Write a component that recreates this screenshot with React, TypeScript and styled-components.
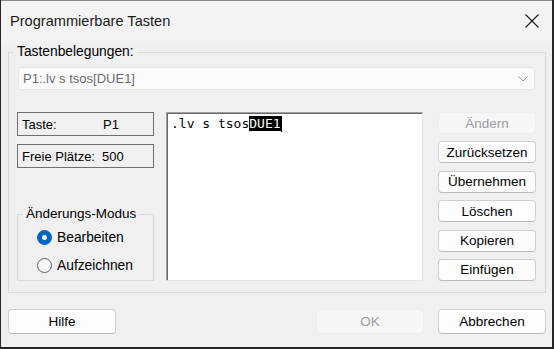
import React from "react";
import styled, { createGlobalStyle } from "styled-components";

const Global = createGlobalStyle`
  html, body { margin: 0; padding: 0; }
  body { background: #262626; font-family: "Liberation Sans", Arial, sans-serif; }
  * { box-sizing: border-box; }
`;

const Desktop = styled.div`
  width: 554px;
  height: 349px;
  display: flex;
  padding: 0 2px 2px 1px;
  background: #262626;
`;

const Window = styled.div`
  flex: 1;
  display: flex;
  flex-direction: column;
  background: #f0f0f0;
  border-top: 1px solid #8c8c8c;
`;

const TitleBar = styled.div`
  height: 40px;
  display: flex;
  align-items: center;
  justify-content: space-between;
  padding: 0 13px 0 9px;
  background: #f3f3f3;
`;

const Title = styled.span`
  font-size: 14.6px;
  color: #1a1a1a;
`;

const Body = styled.div`
  flex: 1;
  display: flex;
  flex-direction: column;
  padding: 3px 6px 0 7px;
`;

const Group = styled.fieldset`
  margin: 0;
  min-width: 0;
  border: 1px solid #dadada;
  padding: 0 0 11px 5px;
`;

const Legend = styled.legend<{ $size?: number }>`
  padding: 0 3px;
  font-size: ${(p) => p.$size ?? 13.8}px;
  line-height: 16px;
  color: #000;
`;

const Combo = styled.div`
  height: 23px;
  margin: 7px 10px 0 4px;
  display: flex;
  align-items: center;
  justify-content: space-between;
  padding: 0 6px 0 4px;
  background: #fafafa;
  border: 1px solid #e6e6e6;
  border-radius: 3px;
  font-size: 13px;
  color: #6d6d6d;
`;

const MainRow = styled.div`
  display: flex;
  height: 169px;
  margin: 22px 9px 0 3px;
`;

const LeftCol = styled.div`
  width: 137px;
  margin-right: 12px;
  display: flex;
  flex-direction: column;
`;

const InfoBox = styled.div<{ $gap?: number }>`
  height: 24px;
  margin-top: ${(p) => p.$gap ?? 0}px;
  display: flex;
  align-items: center;
  padding-left: 4px;
  border: 1px solid #6f6f6f;
  font-size: 13px;
  color: #000;
`;

const InfoLabel = styled.span<{ $w: number }>`
  width: ${(p) => p.$w}px;
`;

const ModeGroup = styled.fieldset`
  margin: auto 0 0 0;
  min-width: 0;
  height: 75px;
  border: 1px solid #dadada;
  padding: 1px 0 0 5px;
`;

const RadioRow = styled.div`
  height: 28px;
  display: flex;
  align-items: center;
  padding-left: 14px;
  gap: 5px;
  font-size: 13.8px;
  color: #000;
`;

const RadioDot = styled.span<{ $on?: boolean }>`
  width: 15px;
  height: 15px;
  border-radius: 50%;
  display: flex;
  align-items: center;
  justify-content: center;
  background: ${(p) => (p.$on ? "#0067c0" : "#f7f7f7")};
  border: 1px solid ${(p) => (p.$on ? "#0067c0" : "#5c5c5c")};
  &::after {
    content: "";
    width: 5px;
    height: 5px;
    border-radius: 50%;
    background: #fff;
    display: ${(p) => (p.$on ? "block" : "none")};
  }
`;

const Editor = styled.div`
  width: 257px;
  background: #fff;
  border-style: solid;
  border-width: 1px;
  border-color: #a0a0a0 #e3e3e3 #e3e3e3 #a0a0a0;
  box-shadow: inset 1px 1px 0 #696969;
  padding: 3px 0 0 4px;
  font-family: "DejaVu Sans Mono", "Liberation Mono", monospace;
  font-size: 13px;
  line-height: 16px;
  color: #000;
  white-space: pre;
`;

const Selected = styled.span`
  background: #000;
  color: #fff;
`;

const Caret = styled.span`
  display: inline-block;
  width: 1px;
  height: 16px;
  vertical-align: top;
  background: #000;
`;

const ButtonCol = styled.div`
  width: 98px;
  margin-left: 15px;
  display: flex;
  flex-direction: column;
  justify-content: space-between;
`;

const Button = styled.button<{ $off?: boolean; $w?: number; $h?: number }>`
  width: ${(p) => p.$w ?? 98}px;
  height: ${(p) => p.$h ?? 22}px;
  padding: 0;
  font-family: "Liberation Sans", Arial, sans-serif;
  font-size: 13.5px;
  border-radius: 4px;
  color: ${(p) => (p.$off ? "#9d9d9d" : "#000")};
  background: ${(p) => (p.$off ? "#f6f6f6" : "#fdfdfd")};
  border: 1px solid ${(p) => (p.$off ? "#eeeeee" : "#cfcfcf")};
  border-bottom-color: ${(p) => (p.$off ? "#eeeeee" : "#bdbdbd")};
`;

const Footer = styled.div`
  display: flex;
  align-items: center;
  margin-top: 16px;
  gap: 14px;
`;

const Spacer = styled.div`
  flex: 1;
`;

export default function App() {
  return (
    <>
      <Global />
      <Desktop>
        <Window>
          <TitleBar>
            <Title>Programmierbare Tasten</Title>
            <svg width="14" height="14" viewBox="0 0 14 14">
              <path d="M0.5 0.5 L13.5 13.5 M13.5 0.5 L0.5 13.5" stroke="#1a1a1a" strokeWidth="1.1" fill="none" />
            </svg>
          </TitleBar>
          <Body>
            <Group>
              <Legend>Tastenbelegungen:</Legend>
              <Combo>
                <span>P1:.lv s tsos[DUE1]</span>
                <svg width="10" height="6" viewBox="0 0 10 6">
                  <path d="M0.5 0.5 L5 5 L9.5 0.5" stroke="#9a9a9a" strokeWidth="1" fill="none" />
                </svg>
              </Combo>
              <MainRow>
                <LeftCol>
                  <InfoBox>
                    <InfoLabel $w={81}>Taste:</InfoLabel>
                    <span>P1</span>
                  </InfoBox>
                  <InfoBox $gap={8}>
                    <InfoLabel $w={80}>Freie Plätze:</InfoLabel>
                    <span>500</span>
                  </InfoBox>
                  <ModeGroup>
                    <Legend $size={13.5}>Änderungs-Modus</Legend>
                    <RadioRow>
                      <RadioDot $on />
                      <span>Bearbeiten</span>
                    </RadioRow>
                    <RadioRow>
                      <RadioDot />
                      <span>Aufzeichnen</span>
                    </RadioRow>
                  </ModeGroup>
                </LeftCol>
                <Editor>
                  .lv s tsos<Selected>DUE1</Selected>
                  <Caret />
                </Editor>
                <ButtonCol>
                  <Button $off>Ändern</Button>
                  <Button>Zurücksetzen</Button>
                  <Button>Übernehmen</Button>
                  <Button>Löschen</Button>
                  <Button>Kopieren</Button>
                  <Button>Einfügen</Button>
                </ButtonCol>
              </MainRow>
            </Group>
            <Footer>
              <Button $w={108} $h={25}>Hilfe</Button>
              <Spacer />
              <Button $w={108} $h={25} $off>OK</Button>
              <Button $w={108} $h={25}>Abbrechen</Button>
            </Footer>
          </Body>
        </Window>
      </Desktop>
    </>
  );
}
